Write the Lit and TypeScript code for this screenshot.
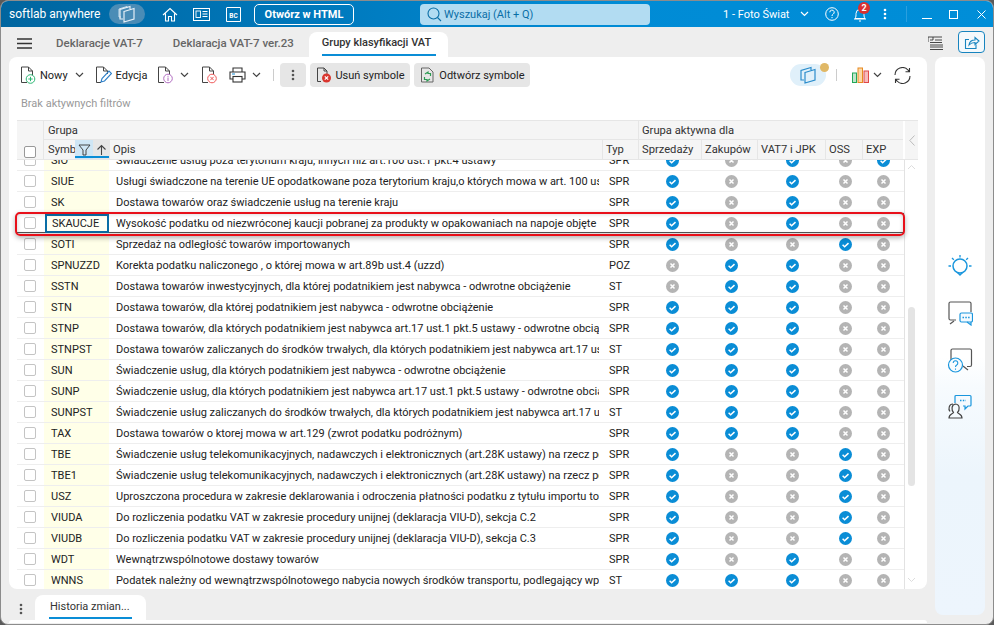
import { LitElement, html, css, svg } from "lit";
import { customElement } from "lit/decorators.js";

type R = [string, string, string, string];
const RS1 = "Świadczenie usług telekomunikacyjnych, nadawczych i elektronicznych (art.28K ustawy) na rzecz podmiotów niebędących podatnikami";
const rows: R[] = [
  ["SIO", "Świadczenie usług poza terytorium kraju, innych niż art.100 ust.1 pkt.4 ustawy", "SPR", "10101"],
  ["SIUE", "Usługi świadczone na terenie UE opodatkowane poza terytorium kraju,o których mowa w art. 100 ust.1 pkt 4 ustawy", "SPR", "10100"],
  ["SK", "Dostawa towarów oraz świadczenie usług na terenie kraju", "SPR", "10100"],
  ["SKAUCJE", "Wysokość podatku od niezwróconej kaucji pobranej za produkty w opakowaniach na napoje objęte systemem kaucyjnym", "SPR", "10100"],
  ["SOTI", "Sprzedaż na odległość towarów importowanych", "SPR", "10010"],
  ["SPNUZZD", "Korekta podatku naliczonego , o której mowa w art.89b ust.4 (uzzd)", "POZ", "01100"],
  ["SSTN", "Dostawa towarów inwestycyjnych, dla której podatnikiem jest nabywca - odwrotne obciążenie", "ST", "01100"],
  ["STN", "Dostawa towarów, dla której podatnikiem jest nabywca - odwrotne obciążenie", "SPR", "11100"],
  ["STNP", "Dostawa towarów, dla których podatnikiem jest nabywca art.17 ust.1 pkt.5 ustawy - odwrotne obciążenie", "SPR", "11100"],
  ["STNPST", "Dostawa towarów zaliczanych do środków trwałych, dla których podatnikiem jest nabywca art.17 ust.1 pkt.5 ustawy", "ST", "11100"],
  ["SUN", "Świadczenie usług, dla których podatnikiem jest nabywca - odwrotne obciążenie", "SPR", "11100"],
  ["SUNP", "Świadczenie usług, dla których podatnikiem jest nabywca art.17 ust.1 pkt.5 ustawy - odwrotne obciążenie", "SPR", "11100"],
  ["SUNPST", "Świadczenie usług zaliczanych do środków trwałych, dla których podatnikiem jest nabywca art.17 ust.1 pkt.5 ustawy", "ST", "11100"],
  ["TAX", "Dostawa towarów o ktorej mowa w art.129 (zwrot podatku podróżnym)", "SPR", "11100"],
  ["TBE", RS1, "SPR", "10010"],
  ["TBE1", RS1, "SPR", "10010"],
  ["USZ", "Uproszczona procedura w zakresie deklarowania i odroczenia płatności podatku z tytułu importu towarów", "SPR", "10010"],
  ["VIUDA", "Do rozliczenia podatku VAT w zakresie procedury unijnej (deklaracja VIU-D), sekcja C.2", "SPR", "10010"],
  ["VIUDB", "Do rozliczenia podatku VAT w zakresie procedury unijnej (deklaracja VIU-D), sekcja C.3", "SPR", "10010"],
  ["WDT", "Wewnątrzwspólnotowe dostawy towarów", "SPR", "10100"],
  ["WNNS", "Podatek należny od wewnątrzwspólnotowego nabycia nowych środków transportu, podlegający wpłacie", "ST", "11100"],
];

const ico = (w: number, h: number, body: unknown, vb = `0 0 ${w} ${h}`) =>
  html`<svg width=${w} height=${h} viewBox=${vb} fill="none" class="ico">${body}</svg>`;

const check = ico(13, 13, svg`<circle cx="6.5" cy="6.5" r="6.5" fill="#0a8dd6"/><path d="M3.6 6.8l2 1.9 3.9-3.6" stroke="#fff" stroke-width="1.5"/>`);
const cross = ico(13, 13, svg`<circle cx="6.5" cy="6.5" r="6.5" fill="#b4b4b4"/><path d="M4.5 4.5l4 4M8.5 4.5l-4 4" stroke="#fff" stroke-width="1.5"/>`);
const chev = (c = "#444") => ico(9, 6, svg`<path d="M1 1l3.5 3.5L8 1" stroke=${c} stroke-width="1.2"/>`);
const doc = svg`<path d="M7 16.5H1.5V1h7l4 4v5M8.5 1v4h4" stroke="#444" stroke-width="1"/>`;
const cube = (c: string) => svg`<path d="M6 15H3V5.5L13 2.5V5" stroke=${c} stroke-width="1.2"/><path d="M7 7.5L17 4.5V15L7 18Z" stroke=${c} stroke-width="1.2"/>`;

@customElement("app-root")
export class AppRoot extends LitElement {
  static styles = css`
    :host { display: block; width: 994px; height: 625px; background: #5a5a5a; font-family: Roboto, "Liberation Sans", sans-serif; font-size: 11px; color: #222; }
    .ico { display: block; flex: none; }
    .window { box-sizing: border-box; width: 994px; height: 625px; border: 1px solid #8c8c8c; border-radius: 8px; overflow: hidden; background: #eeeeee; display: flex; flex-direction: column; }

    .title { height: 26px; flex: none; display: flex; align-items: center; color: #fff; background: linear-gradient(90deg, #00659f 0%, #0078bb 30%, #008bd5 60%, #008ed8 100%); }
    .brand { margin-left: 8px; width: 100px; font-size: 12px; white-space: nowrap; }
    .pill { width: 36px; height: 20px; border-radius: 10px; background: #4a8cb6; display: flex; align-items: center; justify-content: center; }
    .home { margin-left: 17px; }
    .news { margin-left: 15px; }
    .bc { margin-left: 16px; }
    .open { box-sizing: border-box; margin-left: 13px; width: 100px; height: 21px; border: 1px solid #fff; border-radius: 5px; display: flex; align-items: center; justify-content: center; font-weight: 700; font-size: 11px; }
    .search { margin-left: 66px; width: 230px; height: 21px; border-radius: 4px; background: #b2dcf2; color: #0a6ea6; display: flex; align-items: center; gap: 2px; padding-left: 7px; box-sizing: border-box; }
    .company { margin-left: 73px; width: 66px; white-space: nowrap; font-size: 11px; }
    .cchev { margin-left: 11px; }
    .help { margin-left: 16px; }
    .bell { margin-left: 14px; position: relative; }
    .badge { position: absolute; left: 5px; top: -5px; width: 12px; height: 12px; border-radius: 50%; background: #d9302f; color: #fff; font-size: 9px; font-weight: 700; display: flex; align-items: center; justify-content: center; }
    .tdots { margin-left: 16px; }
    .tsep { margin-left: 19px; width: 1px; height: 16px; background: #2a9fdf; }
    .min { margin-left: 15px; }
    .max { margin-left: 17px; }
    .close { margin-left: 19px; }

    .tabs { height: 30px; flex: none; display: flex; align-items: flex-end; position: relative; }
    .burger { margin: 0 0 8px 16px; }
    .tab { color: #666; font-weight: 500; font-size: 11.5px; white-space: nowrap; height: 25px; box-sizing: border-box; padding-top: 4px; }
    .t1 { margin-left: 24px; }
    .t2 { margin-left: 30px; }
    .active { margin-left: 15px; width: 139px; background: #fff; color: #333; border-radius: 8px 8px 0 0; padding: 4px 13px 0; position: relative; font-size: 11px; }
    .active::after { content: ""; position: absolute; left: 13px; right: 12px; bottom: 1px; height: 2px; background: #0a8dd6; }
    .listi { margin: 0 0 7px auto; }
    .share { box-sizing: border-box; margin: 0 8px 4px 15px; width: 27px; height: 22px; border: 1px solid #1784bf; border-radius: 4px; background: #f4f9fc; display: flex; align-items: center; justify-content: center; }

    .body { flex: 1; display: flex; min-height: 0; }
    .left { margin-left: 8px; width: 918px; display: flex; flex-direction: column; }
    .card { position: relative; height: 532px; flex: none; background: #fff; border-radius: 8px; box-sizing: border-box; padding: 6px 9px 0 8px; display: flex; flex-direction: column; overflow: hidden; }

    .toolbar { height: 24px; flex: none; display: flex; align-items: center; padding-left: 3px; }
    .tool { display: flex; align-items: center; gap: 4px; white-space: nowrap; color: #222; }
    .m6 { margin-left: 6px; }
    .m7 { margin-left: 7px; }
    .m10 { margin-left: 10px; }
    .m11 { margin-left: 11px; }
    .m12 { margin-left: 12px; }
    .vsep { width: 1px; height: 12px; background: #ccc; }
    .gbtn { height: 24px; box-sizing: border-box; background: #e6e6e6; border-radius: 4px; display: flex; align-items: center; justify-content: center; gap: 4px; color: #222; white-space: nowrap; font-size: 11px; }
    .more { width: 26px; margin-left: 6px; }
    .del { width: 100px; margin-left: 4px; }
    .restore { width: 116px; margin-left: 4px; }
    .pill2 { margin-left: auto; width: 36px; height: 22px; border-radius: 11px; background: #e0f0fa; display: flex; align-items: center; justify-content: center; position: relative; margin-right: 10px; }
    .dot { position: absolute; right: -3px; top: -1px; width: 9px; height: 9px; border-radius: 50%; background: #e0b866; }
    .rsep { margin-right: 15px; }
    .bars { margin-right: 4px; }
    .rchev { margin-right: 12px; }
    .refresh { margin-right: 7px; }

    .filters { margin: 9px 0 8px 4px; height: 16px; line-height: 16px; flex: none; color: #999; font-size: 11px; }

    .head { flex: none; height: 40px; display: flex; box-sizing: border-box; border-top: 1px solid #e6e6e6; border-bottom: 1px solid #e6e6e6; font-size: 11.2px; }
    .hgrid { width: 886px; background: #f5f5f5; display: grid; grid-template-columns: 26px 66px 493px 36px 63px 56px 68px 37px 41px; grid-template-rows: 19px 19px; color: #333; }
    .hgrid > div { display: flex; align-items: center; padding-left: 3px; box-sizing: border-box; border-left: 1px solid #e6e6e6; white-space: nowrap; overflow: hidden; }
    .hgrid > .hcheck { grid-row: 1 / 3; grid-column: 1; border-left: 0; align-items: flex-end; padding: 0 0 1px 7px; }
    .hgrid > .g1 { grid-column: 2 / 5; border-bottom: 1px solid #e6e6e6; padding-left: 4px; }
    .hgrid > .g2 { grid-column: 5 / 10; border-bottom: 1px solid #e6e6e6; }
    .hgrid > .sym { padding: 0 0 0 4px; position: relative; }
    .hbtn { position: absolute; top: 0; bottom: 0; display: flex; align-items: center; justify-content: center; }
    .hf { left: 31px; width: 18px; background: #cfe6f5; }
    .ha { left: 49px; width: 17px; background: #e6e6e6; }
    .hu { position: absolute; left: 31px; width: 35px; bottom: 1px; height: 2px; background: #0a8dd6; }
    .collapse { margin-left: 2px; width: 13px; background: #f5f5f5; display: flex; align-items: center; justify-content: center; }

    .tbody { flex: 1; display: flex; min-height: 0; }
    .list { width: 888px; box-sizing: border-box; border-right: 1px solid #e2e2e2; overflow: hidden; }
    .list-in { margin-top: -10px; }
    .row { height: 21px; box-sizing: border-box; border-bottom: 1px solid #eee; display: grid; grid-template-columns: 27px 65px 494px 35px 68px 50px 72px 34px 42px; align-items: center; color: #222; }
    .row.sel { box-shadow: inset 0 1px #555, inset 0 -1px #555; }
    .cbc { padding-left: 7px; }
    .box { box-sizing: border-box; width: 12px; height: 12px; border: 1px solid #c4c4c4; border-radius: 2px; background: #fff; }
    .hcheck .box { border-color: #999; }
    .symc { align-self: stretch; background: #ffffe8; padding-left: 7px; display: flex; align-items: center; box-sizing: border-box; }
    .sel .symc { border: 2px solid #0a6ea6; background: #fffff4; padding-left: 5px; margin: 1px 0 0 1px; }
    .opis { padding-left: 7px; margin-right: 4px; white-space: nowrap; overflow: hidden; }
    .typ { padding-left: 6px; }
    .ic { display: flex; justify-content: center; }

    .scroll { width: 13px; display: flex; flex-direction: column; align-items: center; position: relative; }
    .sup { margin-top: 4px; }
    .thumb { margin-top: 137px; width: 7px; height: 179px; background: #e4e4e4; border-radius: 4px; }
    .sdown { margin-top: auto; margin-bottom: 6px; }

    .redbox { position: absolute; left: 6px; top: 155px; width: 890px; height: 24px; box-sizing: border-box; border: 2px solid #e8101a; border-radius: 5px; box-shadow: 0 2px 5px rgba(0,0,0,.3), inset 0 0 4px rgba(0,0,0,.2); }

    .bottom { margin-top: 6px; height: 25px; flex: none; display: flex; }
    .bdots { margin: 8px 0 0 10px; }
    .btab { box-sizing: border-box; margin-left: 12px; width: 111px; background: #fff; border-radius: 8px 8px 0 0; padding: 5px 0 0 15px; color: #333; position: relative; white-space: nowrap; font-size: 11px; }
    .btab::after { content: ""; position: absolute; left: 14px; width: 83px; bottom: 1px; height: 2px; background: #0a8dd6; }
    .strip { flex: 1; background: #fff; border-radius: 8px 8px 0 0; margin-bottom: 1px; }

    .panel { margin-left: 8px; width: 50px; height: 558px; border-radius: 8px; background: linear-gradient(180deg, #fff 0, #fff 300px, #f7fbfe 330px, #f5fafe 345px, #ecf5fc 420px, #edf5fd 100%); display: flex; flex-direction: column; align-items: center; padding-top: 196px; box-sizing: border-box; gap: 21px; }
  `;

  render() {
    return html`<div class="window">
      ${this.titleBar()}
      ${this.tabs()}
      <div class="body">
        <div class="left">
          <div class="card">
            ${this.toolbar()}
            <div class="filters">Brak aktywnych filtrów</div>
            ${this.head()}
            <div class="tbody">
              <div class="list"><div class="list-in">
                ${rows.map((r) => html`<div class="row ${r[0] === "SKAUCJE" ? "sel" : ""}">
                  <div class="cbc"><div class="box"></div></div>
                  <div class="symc">${r[0]}</div>
                  <div class="opis">${r[1]}</div>
                  <div class="typ">${r[2]}</div>
                  ${[...r[3]].map((v) => html`<div class="ic">${v === "1" ? check : cross}</div>`)}
                </div>`)}
              </div></div>
              <div class="scroll">
                <div class="sup">${ico(9, 6, svg`<path d="M1 5l3.5-3.5L8 5" stroke="#ddd"/>`)}</div>
                <div class="thumb"></div>
                <div class="sdown">${ico(9, 6, svg`<path d="M1 1l3.5 3.5L8 1" stroke="#ddd"/>`)}</div>
              </div>
            </div>
            <div class="redbox"></div>
          </div>
          <div class="bottom">
            <div class="bdots">${this.dots("#555")}</div>
            <div class="btab">Historia zmian...</div>
          </div>
          <div class="strip"></div>
        </div>
        <div class="panel">
          ${ico(26, 26, svg`<circle cx="13" cy="13" r="7" stroke="#1a96dd" stroke-width="1.5"/><path d="M10.5 19.5L13 22l2.5-2.5" stroke="#1a96dd" stroke-width="1.5"/><path d="M13 2v2.5M5 5l1.8 1.8M21 5l-1.8 1.8M1.5 13H4M22 13h2.5" stroke="#1a96dd" stroke-width="1.3"/>`)}
          ${ico(26, 26, svg`<path d="M9 20H3.5a1.5 1.5 0 0 1-1.500-1.500V3.500A1.500 1.500 0 0 1 3.500 2H22.500A1.500 1.500 0 0 1 24 3.500V12" stroke="#555" stroke-width="1.200"/><path d="M3 24l4-3" stroke="#555" stroke-width="1.200"/><rect x="13" y="13" width="12.500" height="9" rx="1.500" stroke="#1a96dd" stroke-width="1.200" fill="#f4fafe"/><path d="M15.500 17.500h7.500" stroke="#1a96dd" stroke-width="1.300" stroke-dasharray="1.500 1.300"/><path d="M20 22l4 3v-3" stroke="#1a96dd" stroke-width="1.200"/>`)}
          ${ico(26, 26, svg`<path d="M4 13V3.500A1.500 1.500 0 0 1 5.500 2H23a1.500 1.500 0 0 1 1.500 1.500V18a1.500 1.500 0 0 1-1.500 1.500H20M16 19l5 4" stroke="#555" stroke-width="1.200"/><circle cx="8.500" cy="18" r="7" stroke="#1a96dd" stroke-width="1.200" fill="#f8fcfe"/><path d="M6.200 16a2.300 2.300 0 1 1 3.500 2c-1 .6-1.200 1-1.200 2M8.500 21.500v1.200" stroke="#1a96dd" stroke-width="1.100"/>`)}
          ${ico(26, 26, svg`<path d="M8 9V2.500A1 1 0 0 1 9 1.500h14a1 1 0 0 1 1 1V11a1 1 0 0 1-1 1h-2l-3 3v-3h-2" stroke="#1a96dd" stroke-width="1.200"/><path d="M13 6.500h6" stroke="#1a96dd" stroke-width="1.300" stroke-dasharray="1.500 1.300"/><path d="M2 24c0-4 3.500-4 4.500-5.500-2-2-2.500-8 2-8.500 5 .5 4 6.500 2 8.500 1 1.500 4.500 1.500 4.500 5.500z M6 10c-4 0-5 5-3 7.500" stroke="#444" stroke-width="1.200" fill="#f4fafe"/>`)}
        </div>
      </div>
    </div>`;
  }

  dots(c: string) {
    return ico(4, 12, svg`<circle cx="2" cy="2" r="1.300" fill=${c}/><circle cx="2" cy="6" r="1.300" fill=${c}/><circle cx="2" cy="10" r="1.300" fill=${c}/>`);
  }

  titleBar() {
    return html`<div class="title">
      <div class="brand">softlab anywhere</div>
      <div class="pill">${ico(20, 20, svg`<path d="M4 13H2V5l8-2.500V4" stroke="#c9dfee" stroke-width="1"/>${cube("#e4eff7")}`)}</div>
      <div class="home">${ico(16, 15, svg`<path d="M1 8l7-6.500L15 8M3.500 6.500V14H6.500V9.500H9.500V14H12.500V6.500" stroke="#fff" stroke-width="1.100"/>`)}</div>
      <div class="news">${ico(17, 13, svg`<rect x=".5" y=".5" width="16" height="12" stroke="#fff"/><rect x="3" y="3" width="4.500" height="6.500" stroke="#fff" stroke-width=".9"/><path d="M9.500 3.500H14.500M9.500 6H14.500M9.500 8.500H14.500" stroke="#fff"/>`)}</div>
      <div class="bc">${ico(15, 15, svg`<path d="M1 .5H14.500V14.500H.5V.5" stroke="#fff"/><text x="7.500" y="10.500" font-size="6.500" font-weight="700" fill="#fff" text-anchor="middle" font-family="Roboto">BC</text>`)}</div>
      <div class="open">Otwórz w HTML</div>
      <div class="search">${ico(15, 15, svg`<circle cx="6.500" cy="6.500" r="5.500" stroke="#0a6ea6" stroke-width="1.100"/><path d="M10.500 10.500l3.500 3.500" stroke="#0a6ea6" stroke-width="1.100"/>`)}<span>Wyszukaj (Alt + Q)</span></div>
      <div class="company">1 - Foto Świat</div>
      <div class="cchev">${chev("#fff")}</div>
      <div class="help">${ico(14, 14, svg`<circle cx="7" cy="7" r="6.300" stroke="#fff"/><path d="M4.800 5.300a2.200 2.200 0 1 1 3.300 1.900c-.8.500-1.100.9-1.100 1.800M7 10v1.200" stroke="#fff"/>`)}</div>
      <div class="bell">${ico(14, 15, svg`<path d="M2 11.500c1.200-1.500 1-3.500 1-5a4 4 0 0 1 8 0c0 1.500-.2 3.500 1 5zM1 12H13M6 14h2" stroke="#fff"/>`)}<div class="badge">2</div></div>
      <div class="tdots">${this.dots("#fff")}</div>
      <div class="tsep"></div>
      <div class="min">${ico(10, 10, svg`<path d="M0 9.500H10" stroke="#fff"/>`)}</div>
      <div class="max">${ico(9, 9, svg`<rect x=".5" y=".5" width="8" height="8" stroke="#fff"/>`)}</div>
      <div class="close">${ico(9, 9, svg`<path d="M.5.500l8 8M8.500.500l-8 8" stroke="#fff"/>`)}</div>
    </div>`;
  }

  tabs() {
    return html`<div class="tabs">
      <div class="burger">${ico(15, 11, svg`<path d="M0 1H15M0 5.500H15M0 10H15" stroke="#333" stroke-width="1.600"/>`)}</div>
      <div class="tab t1">Deklaracje VAT-7</div>
      <div class="tab t2">Deklaracja VAT-7 ver.23</div>
      <div class="tab active">Grupy klasyfikacji VAT</div>
      <div class="listi">${ico(15, 14, svg`<path d="M0 1H14M0 1V6M2 4H5V1M7 4H14M2 6.500H14M2 9H15M2 11H15M2 13.500H15" stroke="#333" stroke-width=".9"/>`)}</div>
      <div class="share">${ico(16, 15, svg`<path d="M12 9.500V13.500H1.500V4.500H5" stroke="#1784bf" stroke-width="1.100"/><path d="M5 10c.5-3.500 3-5 6-5V2.500L15 6 11 9.500V7.500c-2.500 0-4.500.8-6 2.500z" stroke="#1784bf" stroke-width="1.100"/>`)}</div>
    </div>`;
  }

  toolbar() {
    return html`<div class="toolbar">
      <div class="tool">${ico(16, 18, svg`${doc}<circle cx="10.500" cy="13" r="4.300" stroke="#2bb673" fill="#fff"/><path d="M10.500 10.800v4.400M8.300 13h4.400" stroke="#2bb673"/>`)}<span>Nowy</span></div>
      <div class="m7">${chev()}</div>
      <div class="tool m11">${ico(17, 18, svg`<path d="M6 16.500H1.500V1h7l4 4v3M8.500 1v4h4" stroke="#444"/><path d="M6 16l1-3.500 7-7.500 2.500 2.500-7 7.500z" stroke="#2f80c8" stroke-width="1.100"/>`)}<span>Edycja</span></div>
      <div class="m10">${ico(17, 18, svg`${doc}<circle cx="11" cy="12.500" r="4.300" stroke="#b06cc0" fill="#fff"/><path d="M11 11.500v3.500M11 9.800v1" stroke="#b06cc0"/>`)}</div>
      <div class="m6">${chev()}</div>
      <div class="m12">${ico(17, 18, svg`${doc}<circle cx="11" cy="12.500" r="4.300" stroke="#ee5a5a" fill="#fff"/><path d="M9.300 10.800l3.400 3.400M12.700 10.800l-3.400 3.400" stroke="#ee5a5a"/>`)}</div>
      <div class="m11">${ico(17, 16, svg`<path d="M4 5V1H13V5M4 12H1V5H16V12H13" stroke="#333" stroke-width="1.100"/><rect x="4" y="9.500" width="9" height="5.500" stroke="#333" stroke-width="1.100"/><path d="M3 7H6" stroke="#1a8fd6"/>`)}</div>
      <div class="m6">${chev()}</div>
      <div class="vsep m12"></div>
      <div class="gbtn more">${this.dots("#555")}</div>
      <div class="gbtn del">${ico(15, 16, svg`<path d="M5 14.500H1.500V1h6.500l3 3v3M8 1v3h3" stroke="#444"/><circle cx="10.500" cy="11" r="4.500" fill="#d9362f"/><path d="M8.800 9.300l3.400 3.400M12.200 9.300l-3.400 3.400" stroke="#fff" stroke-width="1.200"/>`)}<span>Usuń symbole</span></div>
      <div class="gbtn restore">${ico(15, 16, svg`<path d="M1.500 1H9l4 4v10H1.500z" stroke="#666"/><path d="M5 7l3-2v1.500h2.500V9M10 12l-3 2v-1.500H4.500V10" stroke="#2a9a50" stroke-width="1.200"/>`)}<span>Odtwórz symbole</span></div>
      <div class="pill2">${ico(20, 20, cube("#2a8ccb"))}<div class="dot"></div></div>
      <div class="vsep rsep"></div>
      <div class="bars">${ico(17, 16, svg`<rect x=".5" y="6" width="4" height="9.500" fill="#bfe6cc" stroke="#22a858"/><rect x="6" y="1" width="4.500" height="14.500" fill="#fbd9a8" stroke="#e88a20"/><rect x="12" y="4" width="4.500" height="11.500" fill="#f6bcbc" stroke="#e04848"/>`)}</div>
      <div class="rchev">${chev()}</div>
      <div class="refresh">${ico(17, 17, svg`<path d="M1 8a7.500 7.500 0 0 1 13-5l1.500 1.500M15.500 1v3.800H11.500M16 9a7.500 7.500 0 0 1-13 5L1.500 12.500M1.500 16v-3.800H5.500" stroke="#333" stroke-width="1.100"/>`)}</div>
    </div>`;
  }

  head() {
    return html`<div class="head">
      <div class="hgrid">
        <div class="hcheck"><div class="box"></div></div>
        <div class="g1">Grupa</div>
        <div class="g2">Grupa aktywna dla</div>
        <div class="sym">Symb
          <div class="hbtn hf">${ico(13, 12, svg`<path d="M1 1H12L8 6V11H5V6z" stroke="#333" stroke-width=".9"/>`)}</div>
          <div class="hbtn ha">${ico(11, 12, svg`<path d="M5.500 11V1.500M1.500 5.500l4-4 4 4" stroke="#444" stroke-width="1.100"/>`)}</div>
          <div class="hu"></div>
        </div>
        <div>Opis</div><div>Typ</div><div>Sprzedaży</div><div>Zakupów</div><div>VAT7 i JPK</div><div>OSS</div><div>EXP</div>
      </div>
      <div class="collapse">${ico(6, 11, svg`<path d="M5.500 .5L.8 5.500l4.700 5" stroke="#bbb"/>`)}</div>
    </div>`;
  }
}
